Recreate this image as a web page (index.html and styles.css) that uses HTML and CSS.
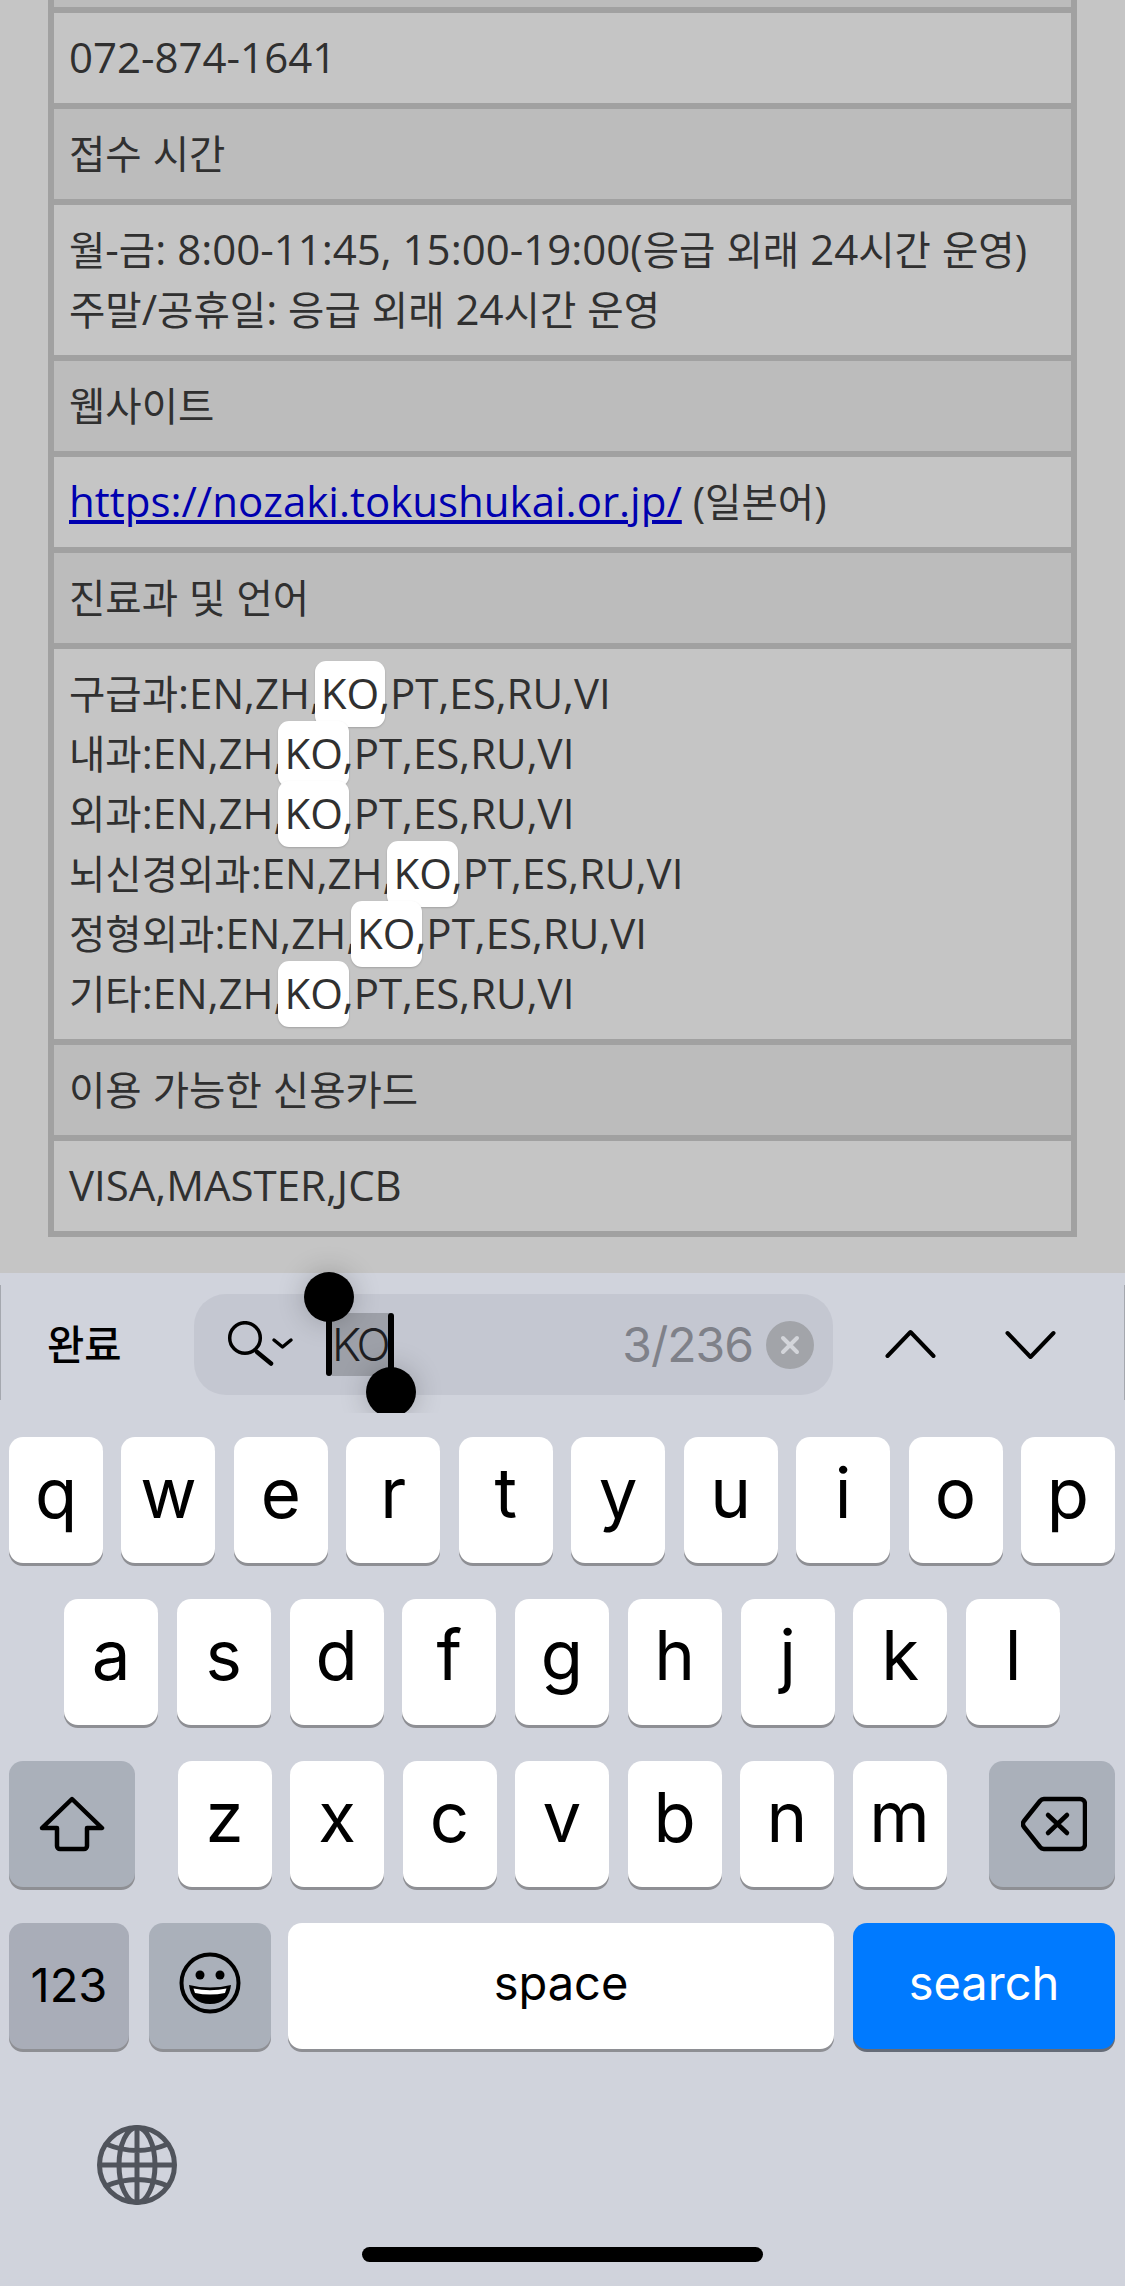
FILE: index.html
```html
<!DOCTYPE html>
<html lang="ko">
<head>
<meta charset="utf-8">
<title>병원 정보</title>
<link rel="stylesheet" href="styles.css">
</head>
<body>
<main class="page">
  <table class="info">
    <tr><td class="sliver"></td></tr>
    <tr><td>072-874-1641</td></tr>
    <tr><th><span class="ko">접수 시간</span></th></tr>
    <tr><td><span class="ko">월</span>-<span class="ko">금</span>: 8:00-11:45, 15:00-19:00(<span class="ko">응급 외래 </span>24<span class="ko">시간 운영</span>)<br><span class="ko">주말</span>/<span class="ko">공휴일</span>: <span class="ko">응급 외래 </span>24<span class="ko">시간 운영</span></td></tr>
    <tr><th><span class="ko">웹사이트</span></th></tr>
    <tr><td><a href="#">https://nozaki.tokushukai.or.jp/</a> (<span class="ko">일본어</span>)</td></tr>
    <tr><th><span class="ko">진료과 및 언어</span></th></tr>
    <tr><td><span class="ko">구급과</span>:EN,ZH,<mark>KO</mark>,PT,ES,RU,VI<br><span class="ko">내과</span>:EN,ZH,<mark>KO</mark>,PT,ES,RU,VI<br><span class="ko">외과</span>:EN,ZH,<mark>KO</mark>,PT,ES,RU,VI<br><span class="ko">뇌신경외과</span>:EN,ZH,<mark>KO</mark>,PT,ES,RU,VI<br><span class="ko">정형외과</span>:EN,ZH,<mark>KO</mark>,PT,ES,RU,VI<br><span class="ko">기타</span>:EN,ZH,<mark>KO</mark>,PT,ES,RU,VI</td></tr>
    <tr><th><span class="ko">이용 가능한 신용카드</span></th></tr>
    <tr><td>VISA,MASTER,JCB</td></tr>
  </table>
</main>
<section class="kb">
  <div class="findbar">
    <span class="done">완료</span>
    <div class="field">
      <svg class="mag" viewBox="0 0 68 48" width="68" height="48"><circle cx="18" cy="17" r="15.300" fill="none" stroke="#000" stroke-width="3.500"/><path d="M30 31 L44 42.500" fill="none" stroke="#000" stroke-width="4.500" stroke-linecap="round"/><path d="M47 19 L55.500 26 L64 19" fill="none" stroke="#000" stroke-width="3.500" stroke-linecap="round" stroke-linejoin="round"/></svg>
      <span class="query">KO</span>
      <span class="count">3/236</span>
      <span class="clear"><svg viewBox="0 0 48 48" width="48" height="48"><circle cx="24" cy="24" r="24" fill="#a2a4a9"/><path d="M17 17 L31 31 M31 17 L17 31" stroke="#d3d5da" stroke-width="4" stroke-linecap="round"/></svg></span>
      <span class="handle handle-a"></span>
      <span class="handle handle-b"></span>
    </div>
    <div class="nav">
      <svg viewBox="0 0 52 30" width="52" height="30"><path d="M2.500 27 L25.500 3 L48.500 27" fill="none" stroke="#000" stroke-width="4" stroke-linecap="round" stroke-linejoin="round"/></svg>
      <svg viewBox="0 0 52 30" width="52" height="30"><path d="M2.500 4 L25.500 28 L48.500 4" fill="none" stroke="#000" stroke-width="4" stroke-linecap="round" stroke-linejoin="round"/></svg>
    </div>
  </div>
  <div class="keys">
    <div class="row"><span class="key">q</span><span class="key">w</span><span class="key">e</span><span class="key">r</span><span class="key">t</span><span class="key">y</span><span class="key">u</span><span class="key">i</span><span class="key">o</span><span class="key">p</span></div>
    <div class="row row-two"><span class="key">a</span><span class="key">s</span><span class="key">d</span><span class="key">f</span><span class="key">g</span><span class="key">h</span><span class="key">j</span><span class="key">k</span><span class="key">l</span></div>
    <div class="row">
      <span class="key fn wide"><svg viewBox="0 0 66 56" width="66" height="56"><path d="M33 3 L63 32 H48 V50 a3 3 0 0 1-3 3 H21 a3 3 0 0 1-3-3 V32 H3 Z" fill="none" stroke="#000" stroke-width="4.500" stroke-linejoin="round"/></svg></span>
      <div class="letters"><span class="key">z</span><span class="key">x</span><span class="key">c</span><span class="key">v</span><span class="key">b</span><span class="key">n</span><span class="key">m</span></div>
      <span class="key fn wide backspace"><svg viewBox="0 0 66 56" width="66" height="56"><path d="M23 3 H59 a5 5 0 0 1 5 5 V48 a5 5 0 0 1-5 5 H23 a6 6 0 0 1-4-2 L3 31 a5 5 0 0 1 0-6 L19 5 a6 6 0 0 1 4-2 Z" fill="none" stroke="#000" stroke-width="4.500" stroke-linejoin="round"/><path d="M27 19 L46 37 M46 19 L27 37" stroke="#000" stroke-width="4.500" stroke-linecap="round"/></svg></span>
    </div>
    <div class="row row-bottom">
      <span class="key fn label num">123</span>
      <span class="key fn emoji"><svg viewBox="0 0 62 62" width="62" height="62"><circle cx="31" cy="31" r="28.500" fill="none" stroke="#000" stroke-width="4"/><circle cx="21" cy="23" r="4.500"/><circle cx="41" cy="23" r="4.500"/><path d="M10 33 Q31 38 52 33 Q50 52 31 52 Q12 52 10 33 Z"/><path d="M14.500 36.500 Q31 40 47.500 36.500 L46 41 Q31 44 16 41 Z" fill="#fff"/></svg></span>
      <span class="key label space">space</span>
      <span class="key label go">search</span>
    </div>
  </div>
  <div class="globe"><svg viewBox="0 0 80 80" width="80" height="80" fill="none" stroke="#50545c" stroke-width="5"><circle cx="40" cy="40" r="37.500"/><ellipse cx="40" cy="40" rx="18" ry="37.500"/><path d="M40 2.500 V77.500 M2.500 40 H77.500 M9 19 Q40 32 71 19 M9 61 Q40 48 71 61"/></svg></div>
  <div class="home"></div>
</section>
</body>
</html>
```
FILE: styles.css
```css
* { box-sizing: border-box; }
html, body { margin: 0; padding: 0; }
body {
  width: 1125px;
  height: 2286px;
  overflow: hidden;
  background: #c5c5c5;
  font-family: "Open Sans", "Noto Sans CJK KR", sans-serif;
  color: #303030;
}
.page { height: 1273px; padding: 0 48px; overflow: hidden; }
.info {
  width: 1029px;
  border-collapse: separate;
  border-spacing: 0;
  border: 3px solid #a1a1a1;
  border-top: 0;
  font-size: 42px;
  line-height: 60px;
}
.info td, .info th {
  border: 3px solid #a1a1a1;
  padding: 14px 15px 16px;
  text-align: left;
  font-weight: 400;
  white-space: nowrap;
}
.info th { background: #bcbcbc; }
.info td { background: #c5c5c5; }
.info .sliver {
  background: #bcbcbc;
  border-top: 0;
  padding: 0;
  height: 10px;
  line-height: 0;
  font-size: 0;
}
.info a { color: #0000b0; }
.ko {
  font-family: "Noto Sans CJK KR", sans-serif;
  font-size: 39.500px;
  line-height: 1;
}
mark {
  display: inline-block;
  background: #fff;
  color: #303030;
  border-radius: 11px;
  padding: 2px 6px 4px;
  margin: -2px -6px -4px;
  line-height: 60px;
  box-shadow: 0 1px 2px rgba(0, 0, 0, .18);
}
.kb {
  height: 1013px;
  background: #d0d3dc;
  font-family: Inter, "Noto Sans CJK KR", sans-serif;
  color: #000;
}
.findbar {
  display: flex;
  align-items: flex-start;
  padding-top: 21px;
  height: 164px;
}
.done {
  width: 194px;
  height: 115px;
  margin-top: -9px;
  border-left: 1px solid #a5a8af;
  line-height: 116px;
  padding-left: 46px;
  font-size: 40.500px;
  font-weight: 500;
  font-family: "Noto Sans CJK KR", sans-serif;
}
.field {
  position: relative;
  width: 639px;
  height: 101px;
  border-radius: 32px;
  background: #c4c7d1;
  display: flex;
  align-items: center;
  padding-left: 33px;
}
.mag { flex: none; }
.query {
  position: relative;
  margin-left: 37px;
  width: 58px;
  height: 63px;
  background: #9da0a8;
  font-size: 45px;
  font-weight: 300;
  letter-spacing: -3px;
  line-height: 63px;
  color: #1e1e22;
  white-space: nowrap;
}
.query::before, .query::after {
  content: "";
  position: absolute;
  top: 0;
  bottom: 0;
  width: 6px;
  border-radius: 3px;
  background: #000;
}
.query::before { left: -6px; }
.query::after { right: -4px; }
.count {
  margin-left: auto;
  font-size: 48px;
  letter-spacing: -1px;
  color: #7f8189;
}
.clear { display: flex; margin: 0 19px 0 13px; }
.handle {
  position: absolute;
  width: 50px;
  height: 50px;
  border-radius: 50%;
  background: #000;
  box-shadow: 0 0 28px rgba(0, 0, 0, .22);
}
.handle-a { left: 110px; top: -22px; }
.handle-b { left: 172px; top: 73px; clip-path: inset(-40px -40px 4px -40px); }
.nav {
  flex: 1;
  display: flex;
  align-items: flex-start;
  gap: 68px;
  height: 115px;
  margin-top: -9px;
  padding: 44px 0 0 52px;
  border-right: 1px solid #a5a8af;
}
.keys { display: flex; flex-direction: column; gap: 36px; }
.row {
  display: flex;
  justify-content: space-between;
  padding: 0 10px 0 9px;
}
.row-two { padding: 0 65px 0 64px; }
.letters { display: flex; gap: 18.500px; }
.row-bottom { justify-content: flex-start; }
.key {
  flex: none;
  display: flex;
  align-items: center;
  justify-content: center;
  width: 94px;
  height: 126px;
  border-radius: 14px;
  background: #fff;
  box-shadow: 0 3px 0 #8e8f94;
  font-size: 69px;
  font-weight: 380;
  line-height: 1;
  padding-bottom: 14px;
}
.fn { background: #aab0ba; padding-bottom: 0; }
.wide { width: 126px; }
.backspace { padding-left: 3px; }
.label { font-size: 47px; font-weight: 400; padding-bottom: 8px; }
.num { width: 120px; font-size: 47px; background: #a9adb8; padding-bottom: 4px; }
.emoji { width: 122px; margin-left: 20px; background: #aab0ba; padding-bottom: 6px; }
.space { width: 546px; margin-left: 17px; }
.go {
  width: 262px;
  margin-left: 19px;
  background: #007aff;
  color: #fff;
  box-shadow: 0 3px 0 #666c78;
}
.globe { display: flex; padding: 76px 0 0 97px; }
.home {
  width: 401px;
  height: 15px;
  margin: 42px 0 0 362px;
  border-radius: 8px;
  background: #000;
}
```
